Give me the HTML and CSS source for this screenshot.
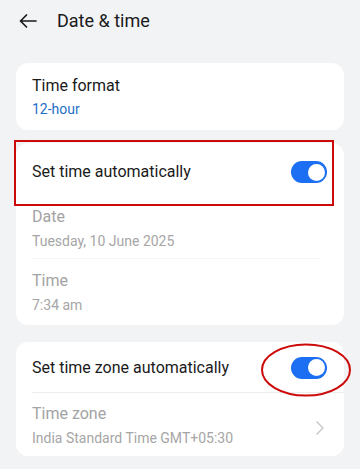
FILE: index.html
```html
<!DOCTYPE html>
<html>
<head>
<meta charset="utf-8">
<link rel="stylesheet" href="styles.css">
</head>
<body>
<header class="topbar">
  <svg class="back" width="20" height="16" viewBox="0 0 20 16"><path d="M18 8H2.5M8.5 2L2.5 8l6 6" fill="none" stroke="#1a1a1a" stroke-width="1.7" stroke-linecap="round" stroke-linejoin="round"/></svg>
  <h1 class="title">Date &amp; time</h1>
</header>

<section class="card card-format">
  <div class="label">Time format</div>
  <div class="value blue">12-hour</div>
</section>

<section class="card card-time">
  <div class="switch-row row-auto">
    <span class="label">Set time automatically</span>
    <span class="toggle"><span class="knob"></span></span>
    <span class="mark-rect"></span>
  </div>
  <div class="info date-block">
    <div class="label gray">Date</div>
    <div class="value gray">Tuesday, 10 June 2025</div>
  </div>
  <div class="divider soft"></div>
  <div class="info time-block">
    <div class="label gray">Time</div>
    <div class="value gray">7:34 am</div>
  </div>
</section>

<section class="card card-zone">
  <div class="switch-row row-zone">
    <span class="label">Set time zone automatically</span>
    <span class="toggle"><span class="knob"></span></span>
    <svg class="mark-ellipse" width="92" height="56" viewBox="0 0 92 56"><ellipse cx="46" cy="28" rx="44" ry="25.5" fill="none" stroke="#cc0a0a" stroke-width="2"/></svg>
  </div>
  <div class="divider"></div>
  <div class="info zone-block">
    <div class="zone-text">
      <div class="label gray">Time zone</div>
      <div class="value gray">India Standard Time GMT+05:30</div>
    </div>
    <svg class="chev" width="8" height="14" viewBox="0 0 8 14"><path d="M1 1l6 6-6 6" fill="none" stroke="#c4c4c4" stroke-width="1.3" stroke-linecap="round" stroke-linejoin="round"/></svg>
  </div>
</section>
</body>
</html>
```

FILE: styles.css
```css
* { box-sizing: border-box; margin: 0; padding: 0; }
html, body { background: #f2f3f5; }
body {
  width: 360px;
  height: 469px;
  overflow: hidden;
  font-family: Roboto, "Noto Sans", "Liberation Sans", sans-serif;
  color: #1a1a1a;
  padding: 0 16px 0 16px;
}
.topbar {
  height: 42px;
  display: flex;
  align-items: center;
  padding-left: 2px;
  gap: 19px;
}
.back { flex: none; margin-top: -1px; }
.title {
  font-size: 18px;
  font-weight: 400;
  line-height: 22px;
  color: #1a1a1a;
  margin-top: -1px;
}
.card {
  background: #ffffff;
  border-radius: 12px;
  width: 328px;
}
.card-format {
  margin-top: 21px;
  padding: 13px 16px 12px;
}
.label {
  font-size: 16px;
  line-height: 20px;
  color: #1a1a1a;
}
.value {
  font-size: 14px;
  line-height: 18px;
  margin-top: 4px;
}
.blue { color: #1f6fc6; }
.gray { color: #a6a6a6; }
.label.gray { color: #a3a3a3; }

.card-time { margin-top: 13px; }
.switch-row {
  position: relative;
  display: flex;
  align-items: center;
  justify-content: space-between;
  padding: 0 17px 0 16px;
}
.row-auto { height: 58px; }
.row-zone { height: 50px; padding-top: 1px; }
.toggle {
  width: 36px;
  height: 22px;
  border-radius: 11px;
  background: #1c6ef2;
  position: relative;
  flex: none;
}
.knob {
  position: absolute;
  right: 2.5px;
  top: 2.5px;
  width: 17px;
  height: 17px;
  border-radius: 50%;
  background: #ffffff;
}
.mark-rect {
  position: absolute;
  left: -2px;
  top: -3px;
  width: 320px;
  height: 66px;
  border: 2px solid #cc0a0a;
}
.mark-ellipse {
  position: absolute;
  right: -8px;
  top: 0px;
}
.info { padding: 0 16px; }
.info .value { margin-top: 5px; }
.date-block { padding-top: 6px; padding-bottom: 8px; }
.time-block { padding-top: 12px; padding-bottom: 11px; }
.divider {
  height: 1px;
  background: #ececec;
  margin-left: 16px;
}
.divider.soft { background: #f5f5f5; margin-right: 24px; }
.card-zone { margin-top: 17px; }
.zone-block {
  display: flex;
  align-items: center;
  justify-content: space-between;
  padding-top: 11px;
  padding-bottom: 9px;
  padding-right: 20px;
}
.chev { flex: none; margin-top: 4px; }
```
